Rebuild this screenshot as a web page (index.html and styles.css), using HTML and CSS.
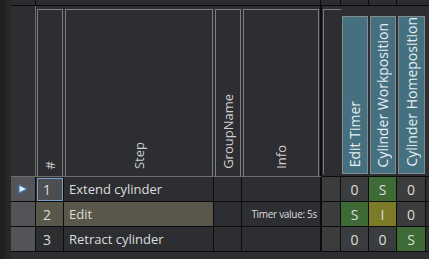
FILE: index.html
```html
<!DOCTYPE html>
<html lang="en">
<head>
    <meta charset="UTF-8">
    <title>Sequence Steps</title>
    <link rel="stylesheet" href="styles.css">
</head>
<body>
    <div class="app">
        <div class="edge"></div>
        <div class="table">
            <div class="cols topband">
                <div class="tb tb-line"></div>
                <div class="tb"></div>
                <div class="tb"></div>
                <div class="tb"></div>
                <div class="tb tb-thick"></div>
                <div class="tb tb-line"></div>
                <div class="tb tb-line"></div>
                <div class="tb tb-line"></div>
                <div class="tb"></div>
                <div class="tb"></div>
            </div>

            <div class="cols header">
                <div class="hcell hc-rh"></div>
                <div class="hcell"><div class="hbox"><span class="vtext">#</span></div></div>
                <div class="hcell"><div class="hbox"><span class="vtext">Step</span></div></div>
                <div class="hcell"><div class="hbox"><span class="vtext">GroupName</span></div></div>
                <div class="hcell hc-info"><div class="hbox"><span class="vtext">Info</span></div></div>
                <div class="hcell hc-right"><div class="hbox hbox-open"></div></div>
                <div class="hcell hc-right"><div class="hbox hbox-blue"><span class="vtext">Edit Timer</span></div></div>
                <div class="hcell hc-right"><div class="hbox hbox-blue"><span class="vtext">Cylinder Workposition</span></div></div>
                <div class="hcell hc-right"><div class="hbox hbox-blue"><span class="vtext">Cylinder Homeposition</span></div></div>
                <div class="hcell hc-right"></div>
            </div>

            <div class="cols row row-first">
                <div class="cell rh">
                    <svg width="10" height="10" viewBox="0 0 10 10"><polygon points="1,1 9,5 1,9" fill="#e4eef8" stroke="#3d7cc4" stroke-width="1.2" stroke-linejoin="round"/></svg>
                </div>
                <div class="cell num"><div class="focus">1</div></div>
                <div class="cell step">Extend cylinder</div>
                <div class="cell"></div>
                <div class="cell info"></div>
                <div class="cell val"></div>
                <div class="cell val">0</div>
                <div class="cell val green">S</div>
                <div class="cell val">0</div>
                <div class="cell rest"></div>
            </div>

            <div class="cols row">
                <div class="cell rh"></div>
                <div class="cell num sel">2</div>
                <div class="cell step sel">Edit</div>
                <div class="cell"></div>
                <div class="cell info"><span class="note">Timer value: 5s</span></div>
                <div class="cell val"></div>
                <div class="cell val green">S</div>
                <div class="cell val olive">I</div>
                <div class="cell val">0</div>
                <div class="cell rest"></div>
            </div>

            <div class="cols row">
                <div class="cell rh"></div>
                <div class="cell num">3</div>
                <div class="cell step">Retract cylinder</div>
                <div class="cell"></div>
                <div class="cell info"></div>
                <div class="cell val"></div>
                <div class="cell val">0</div>
                <div class="cell val">0</div>
                <div class="cell val green">S</div>
                <div class="cell rest"></div>
            </div>
        </div>
    </div>
</body>
</html>
```

FILE: styles.css
```css
html, body {
    margin: 0;
    padding: 0;
}

body {
    width: 429px;
    height: 259px;
    overflow: hidden;
    background-color: #2b2c2f;
    color: #dcdcdc;
    font-family: "Open Sans", "Noto Sans", sans-serif;
}

.app {
    display: flex;
    height: 259px;
}

.edge {
    width: 6px;
    flex: none;
    background-color: #212121;
    border-right: 5px solid #27282a;
}

.table {
    flex: 1;
    background-color: #2d2e32;
}

.cols {
    display: grid;
    grid-template-columns: 25px 28px 150px 28px 80px 19px 28px 28px 29px 3px;
}

/* frozen strip above the header */
.topband {
    height: 5px;
    border-bottom: 1px solid #0c0c0c;
    background-color: #2b2c2f;
}

.tb-line {
    border-right: 1px solid #0c0c0c;
}

.tb-thick {
    border-right: 1px solid #0c0c0c;
    margin-right: 1px;
}

/* column headers */
.header {
    height: 171px;
}

.hcell {
    display: flex;
    padding-left: 1px;
    padding-top: 3px;
    border-bottom: 1px solid #6e6e6e;
}

.hc-rh {
    padding: 0;
    border-right: 1px solid #6e6e6e;
}

.hc-info {
    border-right: 2px solid #0c0c0c;
}

.hc-right {
    border-bottom: none;
    padding-bottom: 3px;
}

.hbox {
    flex: 1;
    display: flex;
    flex-direction: column;
    justify-content: flex-end;
    align-items: center;
    padding-bottom: 7px;
    border: 1px solid #7c7c7c;
    border-bottom: none;
    margin-right: 1px;
    color: #cfcfcf;
}

.hbox-open {
    border-right: none;
    margin-right: 0;
}

.hbox-blue {
    margin-top: 7px;
    background-color: #44707f;
    border: 1px solid #858a8c;
    padding-bottom: 6px;
    color: #e6eef0;
}

.vtext {
    writing-mode: vertical-rl;
    transform: rotate(180deg);
    font-size: 13px;
    line-height: 16px;
    white-space: nowrap;
}

.hbox-blue .vtext {
    font-size: 14px;
}

/* data rows */
.row {
    height: 24px;
    border-bottom: 1px solid #0c0c0c;
}

.row-first {
    border-top: 1px solid #0c0c0c;
    margin-top: -1px;
}

.cell {
    display: flex;
    align-items: center;
    font-size: 13px;
    border-right: 1px solid #0c0c0c;
}

.rh {
    background-color: #525457;
    padding-left: 7px;
}

.num {
    padding-left: 7px;
    font-size: 14px;
}

.step {
    padding-left: 5px;
}

.sel {
    background-color: #58574a;
}

.focus {
    flex: 1;
    align-self: stretch;
    margin: 1px 0 0 -6px;
    padding-left: 5px;
    display: flex;
    align-items: center;
    background-color: #4d4e51;
    border: 1px solid #7a9fc6;
}

.info {
    justify-content: flex-end;
    padding-right: 3px;
    border-right: 2px solid #0c0c0c;
}

.note {
    font-size: 10px;
    letter-spacing: -0.3px;
}

.val {
    justify-content: center;
    font-size: 14px;
    background-color: #3b3c3e;
}

.green {
    background-color: #3d6a35;
}

.olive {
    background-color: #7d7b27;
}

.rest {
    border-right: none;
}
```
